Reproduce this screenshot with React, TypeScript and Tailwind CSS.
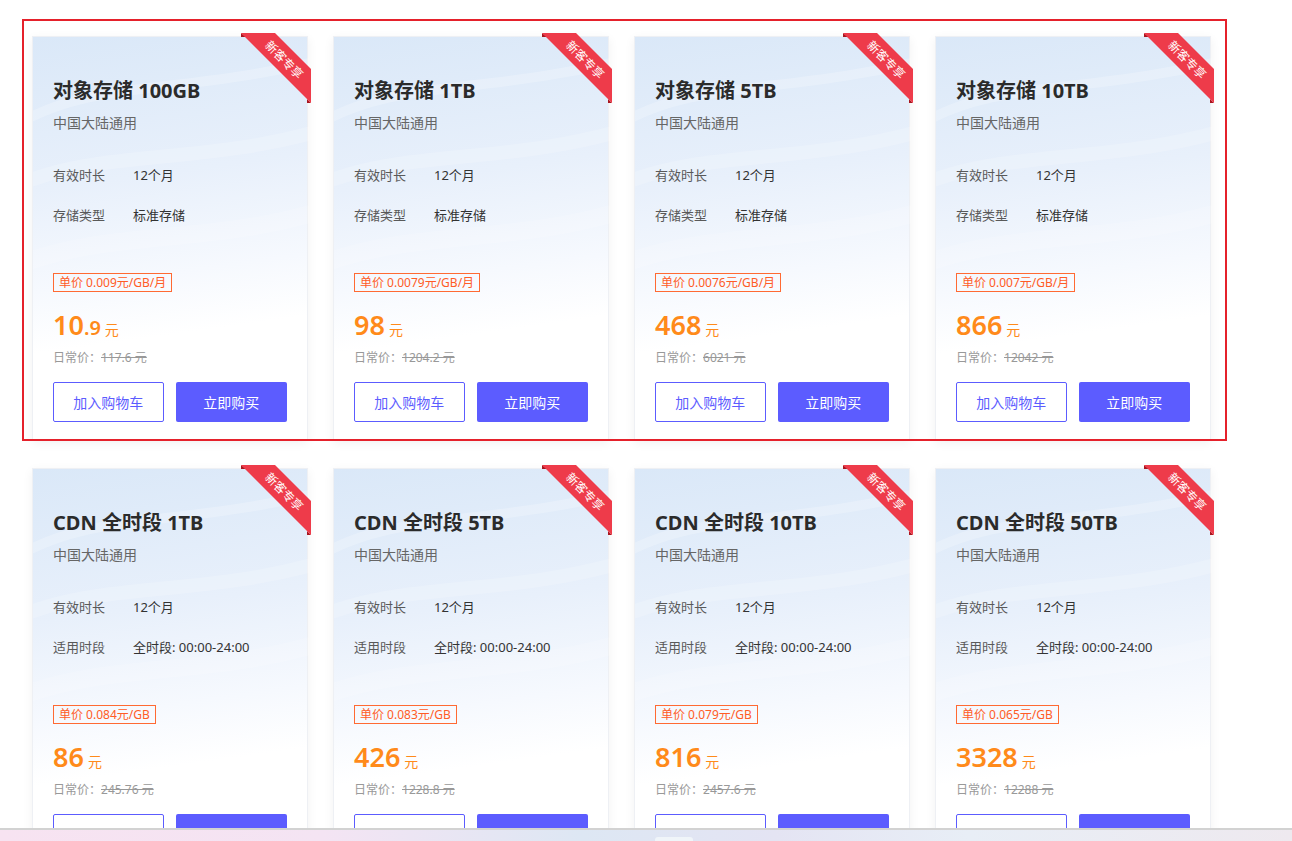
import React from "react";

type Plan = {
  title: string;
  rowLabel: string;
  rowValue: string;
  unit: string;
  priceInt: string;
  priceDec?: string;
  original: string;
};

const plans: Plan[] = [
  { title: "对象存储 100GB", rowLabel: "存储类型", rowValue: "标准存储", unit: "单价 0.009元/GB/月", priceInt: "10", priceDec: ".9", original: "117.6 元" },
  { title: "对象存储 1TB", rowLabel: "存储类型", rowValue: "标准存储", unit: "单价 0.0079元/GB/月", priceInt: "98", original: "1204.2 元" },
  { title: "对象存储 5TB", rowLabel: "存储类型", rowValue: "标准存储", unit: "单价 0.0076元/GB/月", priceInt: "468", original: "6021 元" },
  { title: "对象存储 10TB", rowLabel: "存储类型", rowValue: "标准存储", unit: "单价 0.007元/GB/月", priceInt: "866", original: "12042 元" },
  { title: "CDN 全时段 1TB", rowLabel: "适用时段", rowValue: "全时段: 00:00-24:00", unit: "单价 0.084元/GB", priceInt: "86", original: "245.76 元" },
  { title: "CDN 全时段 5TB", rowLabel: "适用时段", rowValue: "全时段: 00:00-24:00", unit: "单价 0.083元/GB", priceInt: "426", original: "1228.8 元" },
  { title: "CDN 全时段 10TB", rowLabel: "适用时段", rowValue: "全时段: 00:00-24:00", unit: "单价 0.079元/GB", priceInt: "816", original: "2457.6 元" },
  { title: "CDN 全时段 50TB", rowLabel: "适用时段", rowValue: "全时段: 00:00-24:00", unit: "单价 0.065元/GB", priceInt: "3328", original: "12288 元" },
];

function Ribbon() {
  return (
    <svg
      className="absolute -top-1 -right-1 pointer-events-none"
      width="72"
      height="72"
      viewBox="0 0 72 72"
    >
      <polygon points="2,0 7,4 2,4" fill="#a8161f" />
      <polygon points="72,70 68,66 68,70" fill="#a8161f" />
      <polygon points="2,0 36,0 72,36 72,70" fill="#ee3b4a" />
      <text
        x="0"
        y="0"
        transform="translate(46 26) rotate(45)"
        textAnchor="middle"
        dominantBaseline="central"
        fill="#ffffff"
        fontSize="12"
        fontFamily="'Noto Sans CJK SC', sans-serif"
      >
        新客专享
      </text>
    </svg>
  );
}

function Waves() {
  return (
    <svg
      className="absolute inset-0 pointer-events-none"
      width="276"
      height="404"
      viewBox="0 0 276 404"
      fill="none"
    >
      <path d="M-20 90 C 60 40, 150 60, 300 20" stroke="#ffffff" strokeOpacity="0.22" strokeWidth="10" />
      <path d="M-20 150 C 70 110, 170 130, 300 90" stroke="#ffffff" strokeOpacity="0.18" strokeWidth="14" />
      <path d="M-20 230 C 80 190, 180 210, 300 170" stroke="#ffffff" strokeOpacity="0.16" strokeWidth="18" />
    </svg>
  );
}

function Card({ plan }: { plan: Plan }) {
  return (
    <div className="relative w-[276px] h-[404px] border border-[#eef0f4] shadow-[0_3px_10px_rgba(0,0,0,0.06)] bg-[linear-gradient(172deg,#dae8f8_0%,#e8f0fb_35%,#f6f9fe_58%,#ffffff_72%)]">
      <Waves />
      <Ribbon />
      <div className="relative flex flex-col px-5 pt-10">
        <div className="text-[20px] leading-[28px] font-bold text-[#2b2b2b]">{plan.title}</div>
        <div className="mt-2 text-[14px] leading-[20px] text-[#666]">中国大陆通用</div>
        <div className="mt-8 flex flex-col gap-5 text-[13px] leading-[20px]">
          <div className="flex">
            <span className="w-[80px] text-[#595959]">有效时长</span>
            <span className="text-[#333]">12个月</span>
          </div>
          <div className="flex">
            <span className="w-[80px] text-[#595959]">{plan.rowLabel}</span>
            <span className="text-[#333]">{plan.rowValue}</span>
          </div>
        </div>
        <div className="mt-12 flex">
          <span className="border border-[#ff6a33] px-[5px] text-[12px] leading-[17px] text-[#ff5c26]">
            {plan.unit}
          </span>
        </div>
        <div className="mt-[15px] flex items-baseline h-[36px] text-[#ff8a1a]">
          <span className="text-[27px] leading-[36px] font-semibold">{plan.priceInt}</span>
          {plan.priceDec && <span className="text-[20px] leading-[36px] font-semibold">{plan.priceDec}</span>}
          <span className="ml-1 text-[14px]">元</span>
        </div>
        <div className="mt-[6px] text-[12px] leading-[18px] text-[#999]">
          日常价：<span className="line-through">{plan.original}</span>
        </div>
        <div className="mt-[15px] flex gap-3">
          <button className="w-[111px] h-10 border border-[#5c5cff] rounded-[2px] bg-white text-[14px] text-[#5c5cff]">
            加入购物车
          </button>
          <button className="w-[112px] h-10 rounded-[2px] bg-[#5c5cff] text-[14px] text-white">
            立即购买
          </button>
        </div>
      </div>
    </div>
  );
}

export default function App() {
  return (
    <div className="w-[1292px] h-[841px] flex flex-col bg-white overflow-hidden font-['Noto_Sans','Noto_Sans_CJK_SC',sans-serif]">
      <div className="relative h-[828px] overflow-hidden">
        <div className="pl-[32px] pt-[36px] grid grid-cols-[repeat(4,276px)] gap-x-[25px] gap-y-[28px]">
          {plans.map((p) => (
            <Card key={p.title} plan={p} />
          ))}
        </div>
        <div className="absolute left-[22px] top-[19px] w-[1205px] h-[422px] border-2 border-[#e5212b] pointer-events-none" />
      </div>
      <div className="h-[2px] bg-[#d2d2d2]" />
      <div className="relative flex-1 bg-[linear-gradient(90deg,#f7e3f1_0%,#f4e4f3_25%,#dde7f3_45%,#e4e4f3_60%,#e8eef6_75%,#eee9ef_100%)]">
        <div className="absolute left-[655px] top-[7px] w-[38px] h-[6px] rounded-t-[3px] bg-[#f0f5f9]" />
      </div>
    </div>
  );
}
